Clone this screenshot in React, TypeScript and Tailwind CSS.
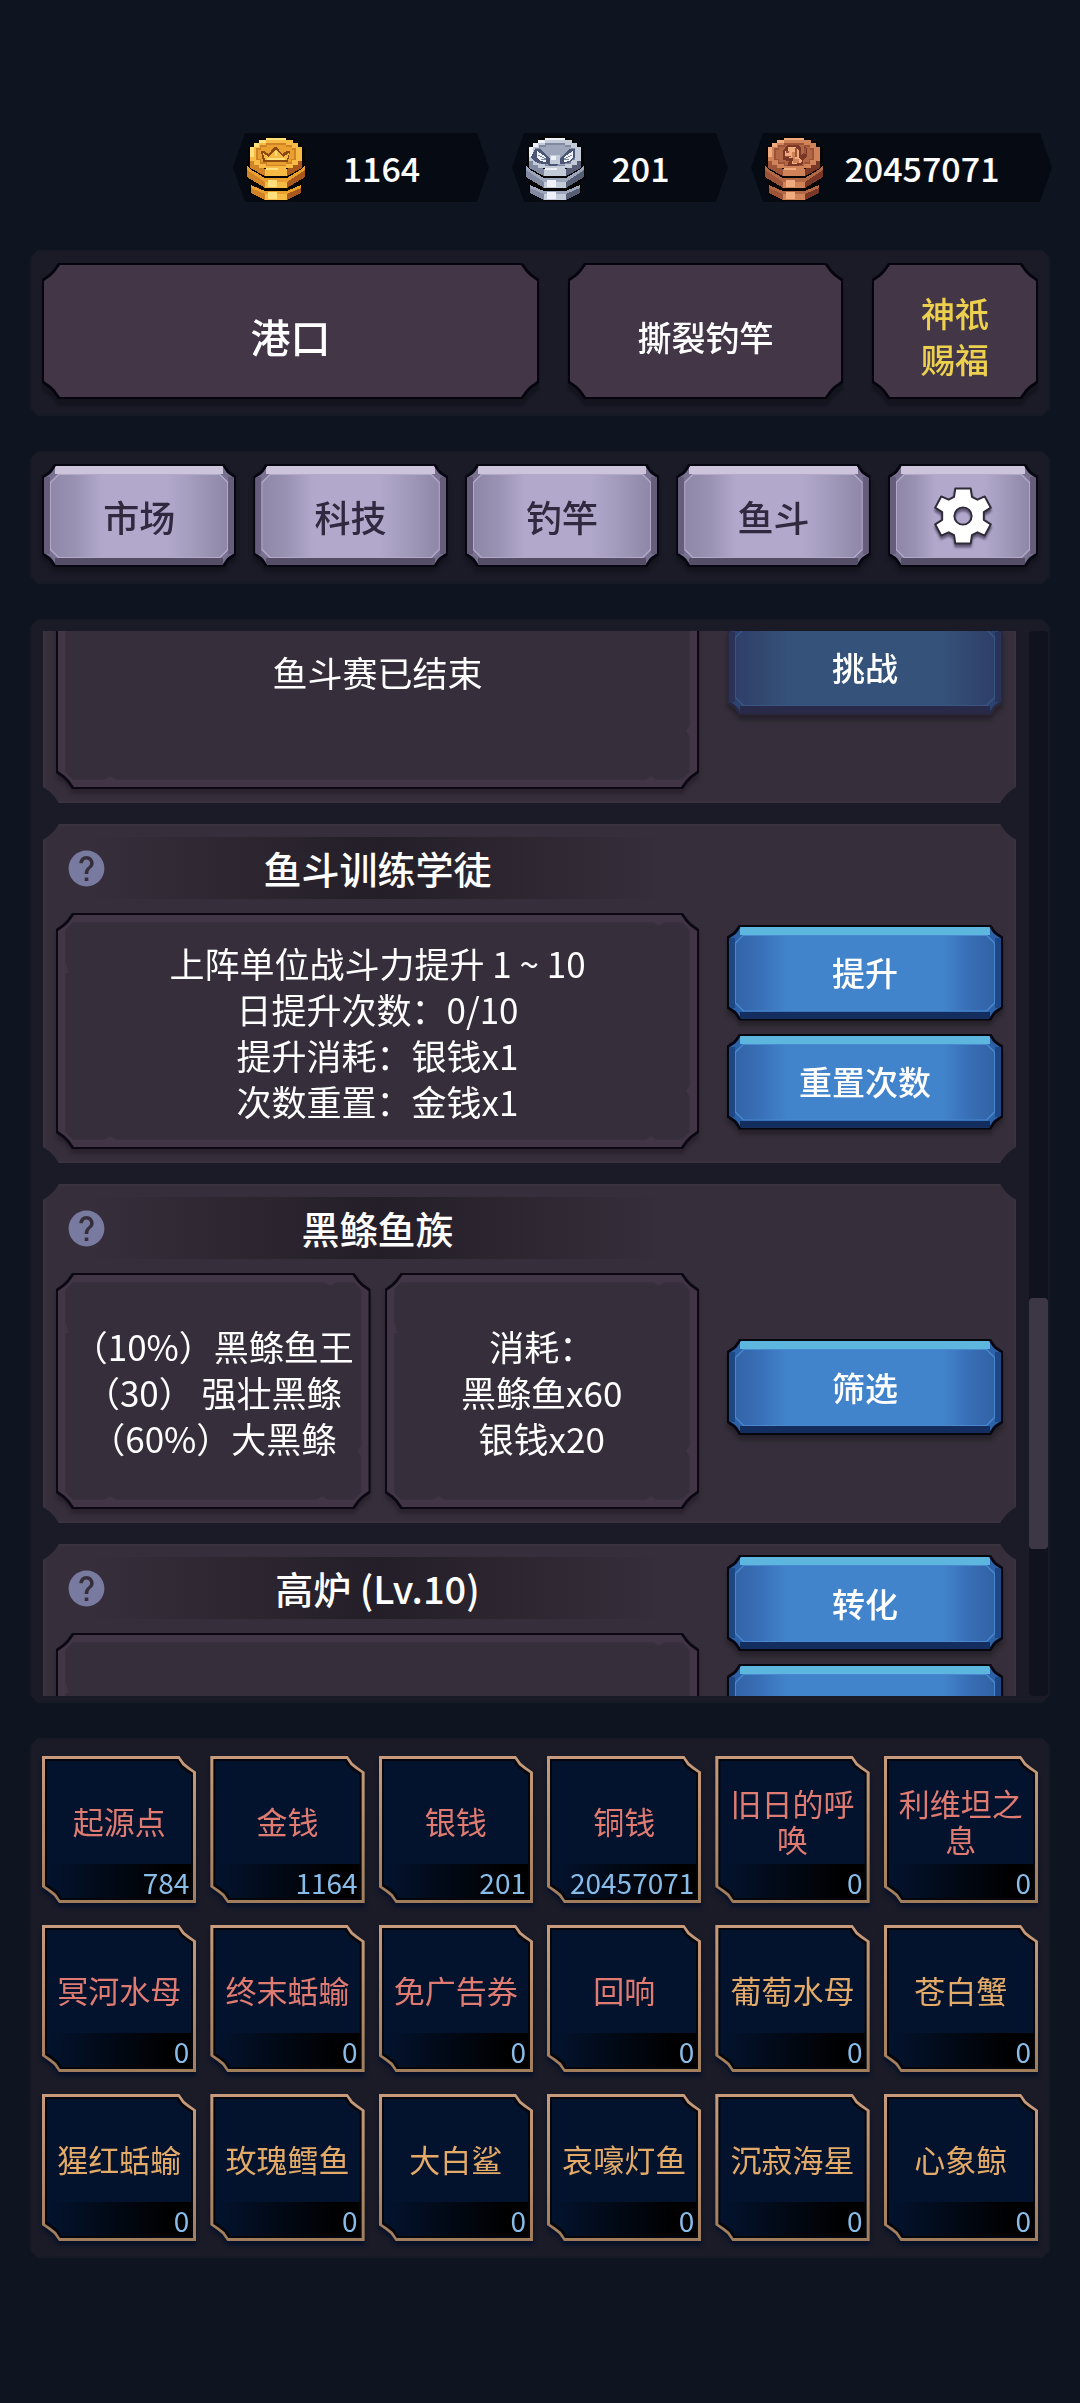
import React, { useLayoutEffect, useRef } from 'react';
import clsx from 'clsx';
import { MdHelp } from 'react-icons/md';

// Scooped corners, from large (panels) to small (button faces)
const NOTCH_LG = '[clip-path:polygon(16px_0,calc(100%-16px)_0,calc(100%-11px)_7px,calc(100%-7px)_11px,100%_16px,100%_calc(100%-16px),calc(100%-7px)_calc(100%-11px),calc(100%-11px)_calc(100%-7px),calc(100%-16px)_100%,16px_100%,11px_calc(100%-7px),7px_calc(100%-11px),0_calc(100%-16px),0_16px,7px_11px,11px_7px)]';
const NOTCH_MD = '[clip-path:polygon(12px_0,calc(100%-12px)_0,calc(100%-8px)_6px,calc(100%-6px)_8px,100%_12px,100%_calc(100%-12px),calc(100%-6px)_calc(100%-8px),calc(100%-8px)_calc(100%-6px),calc(100%-12px)_100%,12px_100%,8px_calc(100%-6px),6px_calc(100%-8px),0_calc(100%-12px),0_12px,6px_8px,8px_6px)]';
const NOTCH_SM = '[clip-path:polygon(8px_0,calc(100%-8px)_0,100%_8px,100%_calc(100%-8px),calc(100%-8px)_100%,8px_100%,0_calc(100%-8px),0_8px)]';

// Item cells are only cut at the top right and bottom left
const CELL_LG = '[clip-path:polygon(0_0,calc(100%-17px)_0,calc(100%-12px)_7px,calc(100%-7px)_11px,100%_16px,100%_100%,17px_100%,12px_calc(100%-7px),7px_calc(100%-11px),0_calc(100%-16px))]';
const CELL_MD = '[clip-path:polygon(0_0,calc(100%-15px)_0,calc(100%-11px)_6px,calc(100%-6px)_10px,100%_14px,100%_100%,15px_100%,11px_calc(100%-6px),6px_calc(100%-10px),0_calc(100%-14px))]';

const TONES = {
    lavender: {
        text: 'text-[36px] text-[#30293f]',
        bevel: 'bg-[#797190] [background-image:linear-gradient(#cdc4db,#cdc4db),linear-gradient(#564e66,#564e66),linear-gradient(90deg,#655d79_6px,transparent_6px,transparent_calc(100%-6px),#655d79_calc(100%-6px))]',
        line: 'bg-[#b1a9ca]',
        face: 'bg-[linear-gradient(90deg,#8f87a8,#9a92b3_14%,#b1a8cc_29%,#b1a8cc_66%,#a49cbd_80%,#8f87a8)]',
    },
    blue: {
        text: 'text-[33px] text-white',
        bevel: 'bg-[#2d62a8] [background-image:linear-gradient(#5db6de,#5db6de),linear-gradient(#132d5e,#132d5e),linear-gradient(90deg,#1e4785_6px,transparent_6px,transparent_calc(100%-6px),#1e4785_calc(100%-6px))]',
        line: 'bg-[#4988cf]',
        face: 'bg-[linear-gradient(90deg,#3364a8,#386fb6_9%,#4284cb_20%,#4284cb_80%,#386fb6_90%,#3262a5)]',
    },
    dim: {
        text: 'text-[33px] text-white',
        bevel: 'bg-[#2c426f] [background-image:linear-gradient(#3e6484,#3e6484),linear-gradient(#292a4a,#292a4a),linear-gradient(90deg,#2a3258_6px,transparent_6px,transparent_calc(100%-6px),#2a3258_calc(100%-6px))]',
        line: 'bg-[#375682]',
        face: 'bg-[linear-gradient(90deg,#2f3f6a,#32486f_10%,#34527a_20%,#34527a_80%,#32486f_90%,#2f3f6a)]',
    },
};

interface BevelButtonProps {
    tone: keyof typeof TONES;
    label?: string;
    disabled?: boolean;
    className?: string;
    children?: React.ReactNode;
}

const BevelButton: React.FC<BevelButtonProps> = ({ tone, label, disabled, className, children }) => {
    const t = TONES[tone];
    return (
        <button
            aria-label={label}
            disabled={disabled}
            className={clsx('flex w-full drop-shadow-[0_5px_2px_rgba(0,0,0,0.3)]', className)}
        >
            <span className={clsx('flex flex-1 p-0.5', NOTCH_MD, tone === 'dim' ? 'bg-[#2a2840]' : 'bg-[#05060f]')}>
                <span
                    className={clsx(
                        'flex flex-1 px-1.5 pt-2 pb-[7px] [background-repeat:no-repeat] [background-position:11px_0,11px_100%,0_50%] [background-size:calc(100%-22px)_8px,calc(100%-22px)_7px,100%_calc(100%-22px)]',
                        NOTCH_MD, t.bevel,
                    )}
                >
                    <span className={clsx('flex flex-1 p-px', NOTCH_SM, t.line)}>
                        <span className={clsx('flex flex-1 items-center justify-center font-medium', NOTCH_SM, t.face, t.text)}>
                            {children}
                        </span>
                    </span>
                </span>
            </span>
        </button>
    );
};

const Panel: React.FC<{ className?: string; children: React.ReactNode }> = ({ className, children }) => (
    <section className={clsx('bg-[#1a1b27] shadow-[inset_0_0_0_2px_#171924]', NOTCH_SM, className)}>{children}</section>
);

const PlainButton: React.FC<{ className?: string; children: React.ReactNode }> = ({ className, children }) => (
    <button className="flex h-[136px] drop-shadow-[0_7px_1px_rgba(0,0,0,0.25)]">
        <span className={clsx('flex flex-1 bg-[#05040c] p-0.5', NOTCH_LG)}>
            <span className={clsx('flex flex-1 items-center justify-center bg-[#433747] pt-2.5 font-medium', NOTCH_LG, className)}>
                {children}
            </span>
        </span>
    </button>
);

/* ---------- Coins ---------- */

const COINS = {
    gold: { hi: '#ffe07a', rim: '#f6ba45', face: '#e9a02e', mid: '#d08227', low: '#a9571c', ink: '#8a4a14' },
    silver: { hi: '#eef2f8', rim: '#c3cad8', face: '#9da6ba', mid: '#8089a0', low: '#565e75', ink: '#4a5674' },
    copper: { hi: '#f0ab7e', rim: '#d08258', face: '#b26844', mid: '#9d5337', low: '#7a3726', ink: '#5f2a1e' },
};

type CoinKind = keyof typeof COINS;

const Coin: React.FC<{ kind: CoinKind }> = ({ kind }) => {
    const c = COINS[kind];
    return (
        <svg viewBox="0 0 60 66" className="h-[66px] w-[60px] shrink-0" shapeRendering="crispEdges" aria-hidden="true">
            <path d="M19 1h22v2h8v4h6v5h4v16h1v16h-4v14h-6v4h-7v4H18v-4h-7v-4H4V44H0V28h2V12h4V7h6V3h7z" fill="#060504" />
            {/* bottom coin */}
            <path d="M5 50l14 6v9L5 58z" fill={c.mid} />
            <path d="M19 56h22v9H19z" fill={c.rim} />
            <path d="M41 56l14-6v8l-14 7z" fill={c.low} />
            <path d="M5 50l14 6h22l14-6v3l-14 6H19L5 53z" fill={c.face} />
            <path d="M22 57h9v7h-9z" fill={c.hi} />
            {/* middle coin */}
            <path d="M1 31l18 13v9L1 42z" fill={c.mid} />
            <path d="M19 44h22v9H19z" fill={c.rim} />
            <path d="M41 44l18-13v11l-18 11z" fill={c.low} />
            <path d="M1 31l18 12h22l18-12v4L41 47H19L1 35z" fill={c.face} />
            <path d="M22 45h9v7h-9z" fill={c.hi} />
            <path d="M4 31l15 9h22l15-9v3L41 43H19L4 34z" fill="#060504" />
            {/* top coin */}
            <path d="M4 24l15 10v7L4 33z" fill={c.mid} />
            <path d="M19 34h22v7H19z" fill={c.rim} />
            <path d="M41 34l15-10v9l-15 8z" fill={c.low} />
            <path d="M20 3h20v2h7v3h5v4h4v14h-4v4h-5v3h-7v2H20v-2h-7v-3H8v-4H4V12h4V8h5V5h7z" fill={c.rim} />
            <path d="M20 3h20v2H20zM13 5h7v3h-7zM8 8h5v4H8zM4 12h4v10H4zM20 33h12v2H20z" fill={c.hi} />
            <path d="M20 8h20v2h6v3h4v12h-4v4h-6v2H20v-2h-6v-4h-4V13h4v-3h6z" fill={c.mid} />
            <path d="M21 10h19v2h6v3h2v9h-3v3h-5v3H21v-3h-6v-3h-3v-9h3v-3h6z" fill={c.face} />
            {kind === 'gold' && (
                <>
                    <path d="M17 27l-2-11h3l5 3 5-7h3l5 7 5-3h3l-2 11z" fill={c.ink} />
                    <path d="M19 25l-2-7 6 4 7-8 7 8 6-4-2 7z" fill={c.rim} />
                    <path d="M21 23h18v2H21zM29 16h2v5h-2z" fill={c.hi} />
                </>
            )}
            {kind === 'silver' && (
                <>
                    <path d="M10 14h5l6 5 3 4h12l3-4 6-5h5v8l-4 5-8 2h-4l-3 2h-6l-3-2h-4l-8-2-4-5z" fill={c.ink} />
                    <path d="M12 16l9 6v5l-6-1-3-4zM48 16l-9 6v5l6-1 3-4z" fill={c.hi} />
                    <path d="M13 20l8 4M47 20l-8 4M16 24h5M44 24h-5" stroke={c.mid} fill="none" />
                    <path d="M25 20h10v9H25z" fill={c.rim} />
                    <path d="M26 21h5v4h-5z" fill={c.hi} />
                </>
            )}
            {kind === 'copper' && (
                <>
                    <path d="M23 10h11l3 3v7l3-3v-5l3 1v8l-4 4v4l-5 2H23l2-5-6-1v-9z" fill={c.low} />
                    <path d="M24 12h8l3 4v7l3 3-1 2-9 1 1-6-8-1v-6h3z" fill={c.hi} />
                    <path d="M22 16h3v2h-3zM21 21h6v1h-6zM31 13h2v9h-2zM40 13h2v6h-2z" fill={c.mid} />
                    <path d="M28 17h3v7h4v4h-6z" fill={c.rim} />
                </>
            )}
        </svg>
    );
};

const BALANCES: Array<{ kind: CoinKind; amount: string }> = [
    { kind: 'gold', amount: '1164' },
    { kind: 'silver', amount: '201' },
    { kind: 'copper', amount: '20457071' },
];

const Gear = () => (
    <svg viewBox="-100 -100 200 200" className="size-16 drop-shadow-[0_3px_1px_rgba(40,34,56,0.6)]" aria-hidden="true">
        <path
            fillRule="evenodd"
            fill="#fff"
            stroke="#2e2a38"
            strokeWidth="6"
            strokeLinejoin="round"
            d="M-24-86H24L28-60 45-51 68-61 87-26 65-12V12L87 26 68 61 45 51 28 60 24 86H-24L-28 60-45 51-68 61-87 26-65 12V-12L-87-26-68-61-45-51-28-60ZM0-27A27 27 0 1 0 0 27A27 27 0 1 0 0-27Z"
        />
    </svg>
);

/* ---------- Scroll list ---------- */

const InfoBox: React.FC<{ lines: string[] }> = ({ lines }) => (
    <div className="flex flex-1 drop-shadow-[0_5px_2px_rgba(20,10,20,0.35)]">
        <div className={clsx('flex flex-1 bg-[#0b0813] p-0.5', NOTCH_LG)}>
            <div className={clsx('relative flex flex-1 bg-[#423646] p-[7px]', NOTCH_LG)}>
                <div className={clsx('flex flex-1 flex-col items-center justify-center bg-[#362f3b] pt-0.5 text-[35px] leading-[46px] whitespace-pre text-white shadow-[inset_0_0_4px_#3e3442]', NOTCH_SM)}>
                    {lines.map((line) => <p key={line}>{line}</p>)}
                </div>
                {/* chipped edges */}
                <i className="absolute bottom-[7px] left-[46px] h-1 w-3 bg-[#403545] [clip-path:polygon(50%_0,100%_100%,0_100%)]" />
                <i className="absolute right-10 bottom-[7px] h-1 w-3 bg-[#403545] [clip-path:polygon(50%_0,100%_100%,0_100%)]" />
                <i className="absolute top-[7px] right-8 h-1 w-3 bg-[#403545] [clip-path:polygon(0_0,100%_0,50%_100%)]" />
                <i className="absolute right-[7px] bottom-[50px] h-3 w-1 bg-[#403545] [clip-path:polygon(100%_0,100%_100%,0_50%)]" />
                <i className="absolute top-[46px] left-[7px] h-3 w-1 bg-[#403545] [clip-path:polygon(0_0,100%_100%,0_100%)]" />
            </div>
        </div>
    </div>
);

interface Building {
    title: string;
    boxes: string[][];
    actions: string[];
    locked?: boolean;
    alignTop?: boolean;
}

const BUILDINGS: Building[] = [
    { title: '', boxes: [['鱼斗赛已结束']], actions: ['挑战'], locked: true },
    {
        title: '鱼斗训练学徒',
        boxes: [['上阵单位战斗力提升 1 ~ 10', '日提升次数：0/10', '提升消耗：银钱x1', '次数重置：金钱x1']],
        actions: ['提升', '重置次数'],
    },
    {
        title: '黑鲦鱼族',
        boxes: [
            ['（10%）黑鲦鱼王', '（30） 强壮黑鲦', '（60%）大黑鲦'],
            ['消耗：', '黑鲦鱼x60', '银钱x20'],
        ],
        actions: ['筛选'],
    },
    { title: '高炉 (Lv.10)', boxes: [[]], actions: ['转化', ''], alignTop: true },
];

const BuildingCard: React.FC<{ building: Building }> = ({ building }) => (
    <article className={clsx('flex h-[339px] shrink-0 gap-7 bg-[#362f3b] px-[13px] shadow-[inset_0_0_0_2px_#3a333f]', NOTCH_LG)}>
        <div className="flex flex-1 flex-col gap-3.5 pt-[13px] pb-3.5">
            <header className="flex h-[62px] items-center bg-[linear-gradient(90deg,transparent_5%,#2d2631_30%,#231e28_50%,#2d2631_70%,transparent_95%)]">
                <button aria-label="说明" className="ml-[9px] w-11 text-[#797a9f]">
                    <MdHelp size={43} />
                </button>
                <h2 className="mr-[53px] flex-1 text-center text-[38px] leading-none font-medium text-white">{building.title}</h2>
            </header>
            <div className="flex flex-1 gap-3.5">
                {building.boxes.map((lines, i) => <InfoBox key={i} lines={lines} />)}
            </div>
        </div>
        <div className={clsx('flex w-[276px] flex-col gap-[13px]', building.alignTop ? 'pt-[11px]' : 'justify-center pt-[67px]')}>
            {building.actions.map((action) => (
                <BevelButton
                    key={action}
                    tone={building.locked ? 'dim' : 'blue'}
                    disabled={building.locked}
                    className="h-24"
                >
                    {action}
                </BevelButton>
            ))}
        </div>
    </article>
);

const BuildingList = () => {
    const listRef = useRef<HTMLDivElement>(null);

    useLayoutEffect(() => {
        if (listRef.current) listRef.current.scrollTop = 167;
    }, []);

    return (
        <Panel className="flex min-h-0 flex-1 gap-[13px] pt-3 pr-0.5 pb-[7px] pl-[13px]">
            <div ref={listRef} className="flex flex-1 flex-col gap-[21px] overflow-y-auto [scrollbar-width:none]">
                {BUILDINGS.map((b, i) => <BuildingCard key={i} building={b} />)}
            </div>
            <div className="relative w-[19px] rounded bg-[#10131d]">
                <div className="absolute inset-x-0 top-[62.6%] h-[23.6%] rounded bg-[#3d3745]" />
            </div>
        </Panel>
    );
};

/* ---------- Inventory ---------- */

const ITEMS = [
    { name: '起源点', count: 784, rare: true },
    { name: '金钱', count: 1164, rare: true },
    { name: '银钱', count: 201, rare: true },
    { name: '铜钱', count: 20457071, rare: true },
    { name: '旧日的呼唤', count: 0, rare: true },
    { name: '利维坦之息', count: 0, rare: true },
    { name: '冥河水母', count: 0, rare: true },
    { name: '终末蛞蝓', count: 0, rare: true },
    { name: '免广告券', count: 0, rare: true },
    { name: '回响', count: 0, rare: true },
    { name: '葡萄水母', count: 0 },
    { name: '苍白蟹', count: 0 },
    { name: '猩红蛞蝓', count: 0 },
    { name: '玫瑰鳕鱼', count: 0 },
    { name: '大白鲨', count: 0 },
    { name: '哀嚎灯鱼', count: 0 },
    { name: '沉寂海星', count: 0 },
    { name: '心象鲸', count: 0 },
];

const ItemCell: React.FC<{ item: (typeof ITEMS)[number] }> = ({ item }) => (
    <button className="flex h-[147px] drop-shadow-[0_4px_2px_rgba(2,14,40,0.8)]">
        <span className={clsx('flex flex-1 bg-linear-to-b from-[#c79b7c] to-[#a07d5b] p-[3px]', CELL_LG)}>
            <span className={clsx('flex flex-1 bg-[#04060c] p-0.5', CELL_MD)}>
                <span className={clsx('flex flex-1 flex-col bg-[#03132e]', CELL_MD)}>
                    <span
                        className={clsx(
                            'flex flex-1 items-center justify-center px-2 pt-4 text-[31px] leading-9',
                            item.rare ? 'text-[#e07b72]' : 'text-[#e3aa68]',
                        )}
                    >
                        {item.name}
                    </span>
                    <span className="h-[34px] bg-linear-to-l from-black from-15% to-transparent pr-0.5 text-right text-[28px] leading-9 text-[#88bdea]">
                        {item.count}
                    </span>
                </span>
            </span>
        </span>
    </button>
);

export default function App() {
    return (
        <main className="flex h-screen min-h-[1500px] flex-col gap-[35px] bg-[#0f1520] px-[30px] pt-[133px] pb-[145px] font-['Noto_Sans_CJK_SC',sans-serif]">
            <div className="mb-[13px] -mr-0.5 grid w-[819px] max-w-full grid-cols-[256fr_216fr_301fr] gap-[23px] self-end">
                {BALANCES.map(({ kind, amount }) => (
                    <div
                        key={kind}
                        className="flex h-[69px] items-center bg-[#060a12] pr-8 pl-[13px] [clip-path:polygon(12px_0,calc(100%-12px)_0,100%_50%,calc(100%-12px)_100%,12px_100%,0_50%)]"
                    >
                        <Coin kind={kind} />
                        <span className="flex-1 text-center text-[34px] leading-none font-medium text-white">{amount}</span>
                    </div>
                ))}
            </div>

            <Panel className="grid grid-cols-[497fr_275fr_166fr] gap-[29px] px-3 pt-[13px] pb-[17px]">
                <PlainButton className="text-[40px] text-white">港口</PlainButton>
                <PlainButton className="text-[34px] text-white">撕裂钓竿</PlainButton>
                <PlainButton className="px-8 text-[34px] leading-[46px] text-[#ecd04e]">神祇赐福</PlainButton>
            </Panel>

            <Panel className="px-3 pt-[13px] pb-[17px]">
                <nav className="grid grid-cols-[194fr_194fr_194fr_194fr_150fr] gap-[17px]">
                    {['市场', '科技', '钓竿', '鱼斗'].map((label) => (
                        <BevelButton key={label} tone="lavender" className="h-[103px]">{label}</BevelButton>
                    ))}
                    <BevelButton tone="lavender" label="设置" className="h-[103px]"><Gear /></BevelButton>
                </nav>
            </Panel>

            <BuildingList />

            <Panel className="grid grid-cols-6 gap-x-3.5 gap-y-[22px] px-3 pt-[18px] pb-[17px]">
                {ITEMS.map((item) => <ItemCell key={item.name} item={item} />)}
            </Panel>
        </main>
    );
}
